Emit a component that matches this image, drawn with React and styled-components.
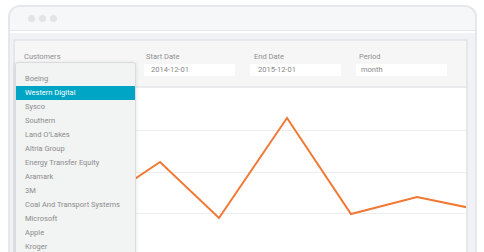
import React from "react";
import styled, { createGlobalStyle } from "styled-components";

const Global = createGlobalStyle`
  html, body { margin: 0; padding: 0; background: #fff; height: 252px; overflow: hidden; }
  body { font-family: Roboto, "Open Sans", sans-serif; }
`;

const Page = styled.div`
  padding: 5px 7px 0 8px;
  height: 252px;
  box-sizing: border-box;
`;

const Frame = styled.div`
  height: 270px;
  border: 2px solid #e5e7eb;
  border-bottom: none;
  border-radius: 12px 12px 0 0;
  background: #f1f2f5;
  display: flex;
  flex-direction: column;
  overflow: hidden;
`;

const TitleBar = styled.div`
  height: 23px;
  flex: none;
  background: #f6f7f9;
  border-bottom: 1px solid #e4e6ea;
  display: flex;
  align-items: center;
  gap: 4px;
  padding-left: 18px;
`;

const Dot = styled.span`
  width: 7px;
  height: 7px;
  border-radius: 50%;
  background: #e3e4e8;
`;

const Body = styled.div`
  flex: 1;
  border-top: 2px solid #fff;
  padding: 6px 7px 0 3px;
  display: flex;
`;

const Panel = styled.div`
  flex: 1;
  border: 2px solid #e5e7eb;
  border-bottom: none;
  background: #fff;
  display: flex;
  flex-direction: column;
  position: relative;
`;

const Filters = styled.div`
  background: #f6f6f7;
  border-bottom: 2px solid #ebebed;
  padding: 10px 0 10px 9px;
  display: grid;
  grid-template-columns: 105px 91px 91px 91px;
  column-gap: 15px;
`;

const Field = styled.div`
  display: flex;
  flex-direction: column;
  gap: 1px;
`;

const Label = styled.div`
  font-size: 7.5px;
  line-height: 12px;
  color: #8f8f8f;
  padding-left: ${(p) => p.$indent || 0}px;
`;

const Input = styled.div`
  height: 12px;
  background: #fff;
  font-size: 7.5px;
  line-height: 12px;
  color: #888;
  padding-left: ${(p) => p.$pad || 7}px;
`;

const Chart = styled.div`
  flex: 1;
  position: relative;
`;

const Dropdown = styled.div`
  position: absolute;
  left: 0;
  top: 21px;
  width: 119px;
  height: 240px;
  background: #f2f3f3;
  border: 1px solid #d9dbdc;
  border-radius: 3px;
  box-shadow: 0 1px 4px rgba(0, 0, 0, 0.12);
  padding-top: 9px;
  z-index: 2;
`;

const Option = styled.div`
  height: 14px;
  line-height: 14px;
  font-size: 7.5px;
  padding-left: 9px;
  color: ${(p) => (p.$active ? "#fff" : "#8c8c8c")};
  background: ${(p) => (p.$active ? "#00a4c4" : "transparent")};
`;

const customers = [
  "Boeing",
  "Western Digital",
  "Sysco",
  "Southern",
  "Land O’Lakes",
  "Altria Group",
  "Energy Transfer Equity",
  "Aramark",
  "3M",
  "Coal And Transport Systems",
  "Microsoft",
  "Apple",
  "Kroger",
];

const pts = [
  [20, 70],
  [81, 117],
  [145, 74],
  [204, 130],
  [272, 30],
  [336, 126],
  [402, 109],
  [460, 121],
];

export default function App() {
  return (
    <>
      <Global />
      <Page>
        <Frame>
          <TitleBar>
            <Dot />
            <Dot />
            <Dot />
          </TitleBar>
          <Body>
            <Panel>
              <Filters>
                <Field>
                  <Label>Customers</Label>
                </Field>
                <Field>
                  <Label $indent={2}>Start Date</Label>
                  <Input $pad={7}>2014-12-01</Input>
                </Field>
                <Field>
                  <Label $indent={4}>End Date</Label>
                  <Input $pad={8}>2015-12-01</Input>
                </Field>
                <Field>
                  <Label $indent={3}>Period</Label>
                  <Input $pad={5}>month</Input>
                </Field>
              </Filters>
              <Chart>
                <svg width="451" height="170" style={{ display: "block" }}>
                  {[42, 84, 125].map((y) => (
                    <line key={y} x1="0" x2="451" y1={y + 0.5} y2={y + 0.5} stroke="#eeeeee" strokeWidth="1" />
                  ))}
                  <polyline
                    points={pts.map((p) => p.join(",")).join(" ")}
                    fill="none"
                    stroke="#f07936"
                    strokeWidth="2"
                    strokeLinejoin="miter"
                  />
                </svg>
              </Chart>
              <Dropdown>
                {customers.map((c) => (
                  <Option key={c} $active={c === "Western Digital"}>
                    {c}
                  </Option>
                ))}
              </Dropdown>
            </Panel>
          </Body>
        </Frame>
      </Page>
    </>
  );
}
